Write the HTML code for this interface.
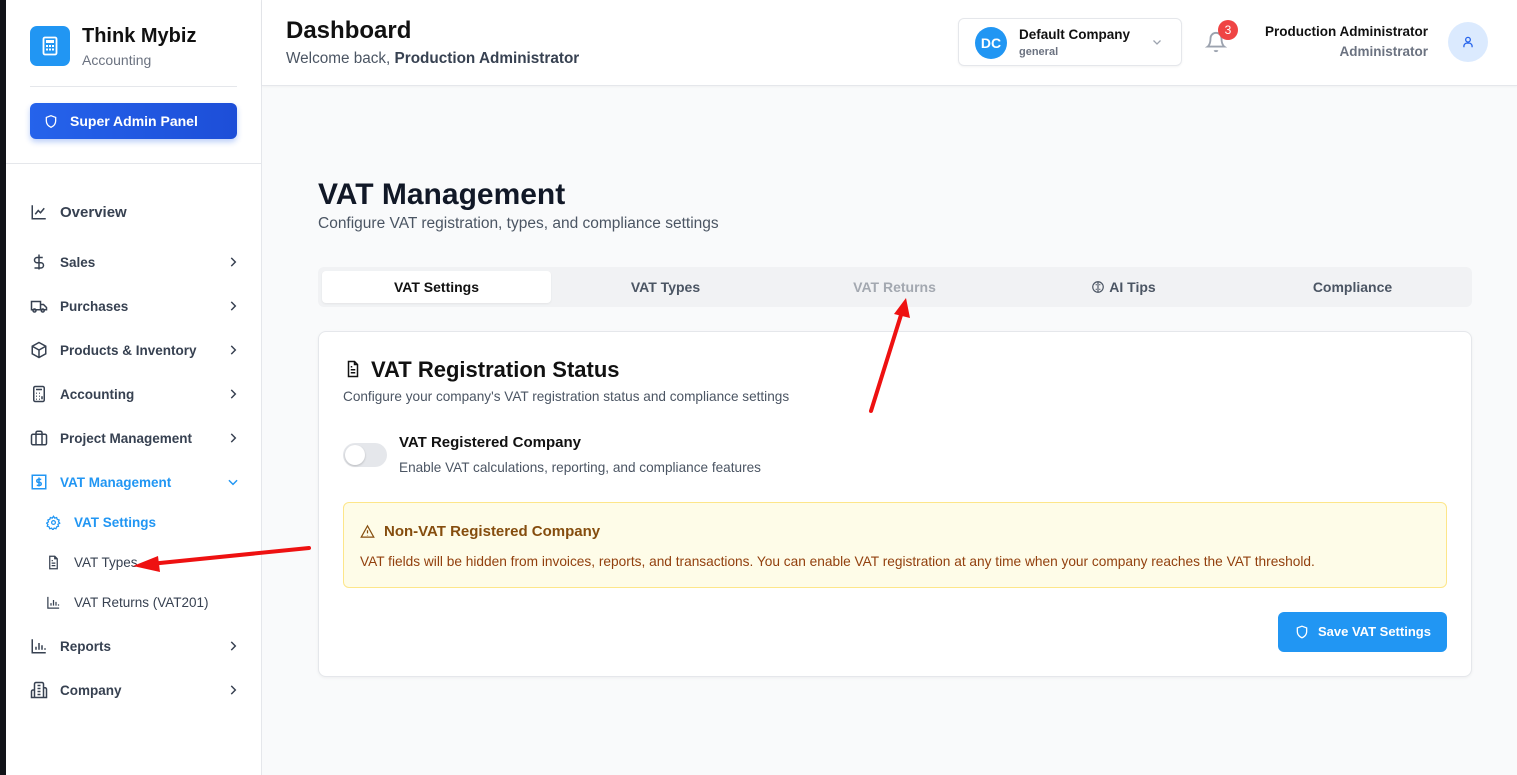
<!DOCTYPE html>
<html><head><meta charset="utf-8">
<style>
*{box-sizing:border-box;margin:0;padding:0}
body{width:1517px;height:775px;overflow:hidden;font-family:"Liberation Sans",sans-serif;background:#f9fafb;position:relative;color:#111827}
.strip{position:absolute;left:0;top:0;width:6px;height:775px;background:#111318}
.side{position:absolute;left:6px;top:0;width:256px;height:775px;background:#fff;border-right:1px solid #e5e7eb}
.logo{position:absolute;left:24px;top:26px;width:40px;height:40px;border-radius:7px;background:#2196f3}
.t1{position:absolute;left:76px;top:25px;font-size:20px;font-weight:bold;color:#111}
.t2{position:absolute;left:76px;top:52px;font-size:14px;color:#6b7280}
.hr1{position:absolute;left:24px;top:86px;width:207px;height:1px;background:#e5e7eb}
.sap{position:absolute;left:24px;top:103px;width:207px;height:36px;border-radius:6px;background:linear-gradient(90deg,#2563eb,#1d4ed8);box-shadow:0 3px 6px rgba(37,99,235,.3);color:#fff;font-weight:bold;font-size:14px;line-height:36px;padding-left:40px}
.hr2{position:absolute;left:0;top:163px;width:256px;height:1px;background:#e5e7eb}
.ni{position:absolute;left:24px;font-size:13.5px;font-weight:bold;color:#374151;height:20px;line-height:20px;width:210px}
.ni svg.ic{position:absolute;left:0;top:1px}
.ni span{position:absolute;left:30px;top:1px}
.ni .ch{position:absolute;right:0;top:3px}
.sub{position:absolute;left:40px;font-size:13.5px;color:#374151;height:20px;line-height:20px}
.sub span{position:absolute;left:28px;top:1px;white-space:nowrap}
.top{position:absolute;left:262px;top:0;width:1255px;height:86px;background:#fff;border-bottom:1px solid #e5e7eb;box-shadow:0 1px 2px rgba(0,0,0,.04)}
</style></head><body>
<div class="strip"></div>
<div class="side">
<div class="logo"><svg width="40" height="40" viewBox="0 0 40 40"><rect x="13.5" y="11.5" width="13" height="17" rx="1.5" fill="none" stroke="#fff" stroke-width="1.8"/><rect x="16" y="14" width="8" height="3" fill="#fff"/><g fill="#fff"><rect x="16" y="19" width="2" height="2"/><rect x="19" y="19" width="2" height="2"/><rect x="22" y="19" width="2" height="2"/><rect x="16" y="22.5" width="2" height="2"/><rect x="19" y="22.5" width="2" height="2"/><rect x="22" y="22.5" width="2" height="2"/></g></svg></div>
<div class="t1">Think Mybiz</div><div class="t2">Accounting</div>
<div class="hr1"></div>
<div class="sap"><svg style="position:absolute;left:14px;top:11px" width="14" height="15" viewBox="0 0 24 24" fill="none" stroke="#fff" stroke-width="2.2"><path d="M12 2l8 3v6c0 5-3.5 9-8 11-4.5-2-8-6-8-11V5z"/></svg>Super Admin Panel</div>
<div class="hr2"></div>
<div class="ni" style="top:202px;font-size:15px"><svg class="ic" width="18" height="18" viewBox="0 0 24 24" fill="none" stroke="#374151" stroke-width="2"><path d="M3 3v18h18M7 15l4-5 3 3 5-6"/></svg><span>Overview</span></div>
<div class="ni" style="top:252px"><svg class="ic" width="18" height="18" viewBox="0 0 24 24" fill="none" stroke="#374151" stroke-width="2"><path d="M12 2v20M17 6H9.5a3.5 3.5 0 0 0 0 7h5a3.5 3.5 0 0 1 0 7H6"/></svg><span>Sales</span><svg class="ch" width="14" height="14" viewBox="0 0 24 24" fill="none" stroke="#374151" stroke-width="2.5"><path d="M9 5l7 7-7 7"/></svg></div>
<div class="ni" style="top:296px"><svg class="ic" width="18" height="18" viewBox="0 0 24 24" fill="none" stroke="#374151" stroke-width="2"><path d="M2 6h12v11H2zM14 10h4l4 4v3h-8"/><circle cx="6" cy="18" r="2"/><circle cx="17" cy="18" r="2"/></svg><span>Purchases</span><svg class="ch" width="14" height="14" viewBox="0 0 24 24" fill="none" stroke="#374151" stroke-width="2.5"><path d="M9 5l7 7-7 7"/></svg></div>
<div class="ni" style="top:340px"><svg class="ic" width="18" height="18" viewBox="0 0 24 24" fill="none" stroke="#374151" stroke-width="2"><path d="M12 2l9 5v10l-9 5-9-5V7zM3 7l9 5 9-5M12 12v10"/></svg><span>Products &amp; Inventory</span><svg class="ch" width="14" height="14" viewBox="0 0 24 24" fill="none" stroke="#374151" stroke-width="2.5"><path d="M9 5l7 7-7 7"/></svg></div>
<div class="ni" style="top:384px"><svg class="ic" width="18" height="18" viewBox="0 0 24 24" fill="none" stroke="#374151" stroke-width="2"><rect x="5" y="2" width="14" height="20" rx="2"/><path d="M8 6h8M8 11h1M12 11h1M16 11h0M8 15h1M12 15h1M8 19h1M12 19h1M16 15v4"/></svg><span>Accounting</span><svg class="ch" width="14" height="14" viewBox="0 0 24 24" fill="none" stroke="#374151" stroke-width="2.5"><path d="M9 5l7 7-7 7"/></svg></div>
<div class="ni" style="top:428px"><svg class="ic" width="18" height="18" viewBox="0 0 24 24" fill="none" stroke="#374151" stroke-width="2"><rect x="2" y="7" width="20" height="14" rx="2"/><path d="M16 21V5a2 2 0 0 0-2-2h-4a2 2 0 0 0-2 2v16"/></svg><span>Project Management</span><svg class="ch" width="14" height="14" viewBox="0 0 24 24" fill="none" stroke="#374151" stroke-width="2.5"><path d="M9 5l7 7-7 7"/></svg></div>
<div class="ni" style="top:472px;color:#2196f3"><svg class="ic" width="18" height="18" viewBox="0 0 24 24" fill="none" stroke="#2196f3" stroke-width="2"><rect x="3" y="3" width="18" height="18"/><path d="M12 6v12M15 8.5h-4a2 2 0 0 0 0 4h2a2 2 0 0 1 0 4H9"/></svg><span>VAT Management</span><svg class="ch" width="14" height="14" viewBox="0 0 24 24" fill="none" stroke="#2196f3" stroke-width="2.5"><path d="M5 9l7 7 7-7"/></svg></div>
<div class="sub" style="top:512px;color:#2196f3;font-weight:bold"><svg style="position:absolute;left:0;top:3px" width="15" height="15" viewBox="0 0 24 24" fill="none" stroke="#2196f3" stroke-width="2"><circle cx="12" cy="12" r="3"/><path d="M12 2l2 3 3-1 1 3 3 1-1 3 2 2-3 2 1 3-3 1-1 3-3-1-2 3-2-3-3 1-1-3-3-1 1-3-2-2 3-2-1-3 3-1 1-3 3 1z"/></svg><span>VAT Settings</span></div>
<div class="sub" style="top:552px"><svg style="position:absolute;left:0;top:3px" width="15" height="15" viewBox="0 0 24 24" fill="none" stroke="#374151" stroke-width="2"><path d="M14 2H6v20h12V6zM14 2v4h4M9 13h6M9 17h6M9 9h2"/></svg><span>VAT Types</span></div>
<div class="sub" style="top:592px"><svg style="position:absolute;left:0;top:3px" width="15" height="15" viewBox="0 0 24 24" fill="none" stroke="#374151" stroke-width="2"><path d="M3 3v18h18M8 17v-4M12 17V8M16 17v-6M20 17v-2"/></svg><span>VAT Returns (VAT201)</span></div>
<div class="ni" style="top:636px"><svg class="ic" width="18" height="18" viewBox="0 0 24 24" fill="none" stroke="#374151" stroke-width="2"><path d="M3 3v18h18M8 17v-4M12 17V8M16 17v-6M20 17v-2"/></svg><span>Reports</span><svg class="ch" width="14" height="14" viewBox="0 0 24 24" fill="none" stroke="#374151" stroke-width="2.5"><path d="M9 5l7 7-7 7"/></svg></div>
<div class="ni" style="top:680px"><svg class="ic" width="18" height="18" viewBox="0 0 24 24" fill="none" stroke="#374151" stroke-width="2"><path d="M6 22V4a2 2 0 0 1 2-2h8a2 2 0 0 1 2 2v18zM6 12H4a2 2 0 0 0-2 2v8h4M18 9h2a2 2 0 0 1 2 2v11h-4M10 6h4M10 10h4M10 14h4M10 18h4"/></svg><span>Company</span><svg class="ch" width="14" height="14" viewBox="0 0 24 24" fill="none" stroke="#374151" stroke-width="2.5"><path d="M9 5l7 7-7 7"/></svg></div>
</div>

<div class="top">
<div style="position:absolute;left:24px;top:17px;font-size:24px;font-weight:bold;color:#111">Dashboard</div>
<div style="position:absolute;left:24px;top:50px;font-size:15.3px;color:#4b5563">Welcome back, <b style="color:#374151">Production Administrator</b></div>
<div style="position:absolute;left:696px;top:18px;width:224px;height:48px;border:1px solid #e5e7eb;border-radius:6px;box-shadow:0 1px 2px rgba(0,0,0,.05)">
<div style="position:absolute;left:16px;top:8px;width:32px;height:32px;border-radius:50%;background:#2196f3;color:#fff;font-weight:bold;font-size:14px;line-height:32px;text-align:center">DC</div>
<div style="position:absolute;left:60px;top:8px;font-size:13.5px;font-weight:bold;color:#111">Default Company</div>
<div style="position:absolute;left:60px;top:27px;font-size:11px;font-weight:bold;color:#6b7280">general</div>
<svg style="position:absolute;left:192px;top:17px" width="12" height="12" viewBox="0 0 24 24" fill="none" stroke="#9ca3af" stroke-width="2.5"><path d="M5 9l7 7 7-7"/></svg>
</div>
<svg style="position:absolute;left:943px;top:31px" width="22" height="22" viewBox="0 0 24 24" fill="none" stroke="#9ca3af" stroke-width="2"><path d="M6 8a6 6 0 0 1 12 0c0 7 3 9 3 9H3s3-2 3-9M10.3 21a1.9 1.9 0 0 0 3.4 0"/></svg>
<div style="position:absolute;left:956px;top:20px;width:20px;height:20px;border-radius:50%;background:#ef4444;color:#fff;font-size:12px;line-height:20px;text-align:center">3</div>
<div style="position:absolute;right:89px;top:24px;font-size:13.5px;font-weight:bold;color:#111;text-align:right">Production Administrator</div>
<div style="position:absolute;right:89px;top:44px;font-size:13.5px;font-weight:bold;color:#6b7280;text-align:right">Administrator</div>
<div style="position:absolute;left:1186px;top:22px;width:40px;height:40px;border-radius:50%;background:#dbeafe"><svg style="position:absolute;left:13px;top:13px" width="14" height="14" viewBox="0 0 24 24" fill="none" stroke="#2563eb" stroke-width="2.2"><circle cx="12" cy="8" r="4"/><path d="M5 21v-2a5 5 0 0 1 5-5h4a5 5 0 0 1 5 5v2"/></svg></div>
</div>

<div style="position:absolute;left:318px;top:178px;font-size:30px;font-weight:bold;color:#111827">VAT Management</div>
<div style="position:absolute;left:318px;top:215px;font-size:15.5px;color:#4b5563">Configure VAT registration, types, and compliance settings</div>

<div style="position:absolute;left:318px;top:267px;width:1154px;height:40px;background:#f1f2f4;border-radius:6px;font-size:14px;font-weight:bold">
<div style="position:absolute;left:4px;top:4px;width:229px;height:32px;background:#fff;border-radius:4px;box-shadow:0 1px 2px rgba(0,0,0,.06);text-align:center;line-height:32px;color:#111">VAT Settings</div>
<div style="position:absolute;left:233px;top:4px;width:229px;line-height:32px;text-align:center;color:#4b5563">VAT Types</div>
<div style="position:absolute;left:462px;top:4px;width:229px;line-height:32px;text-align:center;color:#a3a8b0">VAT Returns</div>
<div style="position:absolute;left:691px;top:4px;width:229px;line-height:32px;text-align:center;color:#4b5563"><svg style="vertical-align:-2px;margin-right:4px" width="14" height="14" viewBox="0 0 24 24" fill="none" stroke="#4b5563" stroke-width="2"><circle cx="12" cy="12" r="9"/><path d="M12 3v18M8 8h2M14 8h2M8 16h2M14 16h2"/></svg>AI Tips</div>
<div style="position:absolute;left:920px;top:4px;width:229px;line-height:32px;text-align:center;color:#4b5563">Compliance</div>
</div>

<div style="position:absolute;left:318px;top:331px;width:1154px;height:346px;background:#fff;border:1px solid #e5e7eb;border-radius:8px;box-shadow:0 1px 3px rgba(0,0,0,.05)">
<svg style="position:absolute;left:25px;top:28px" width="18" height="18" viewBox="0 0 24 24" fill="none" stroke="#111" stroke-width="2"><path d="M14 2H6v20h12V6zM14 2v4h4M9 13h6M9 17h6M9 9h2"/></svg>
<div style="position:absolute;left:52px;top:25px;font-size:22px;font-weight:bold;color:#111">VAT Registration Status</div>
<div style="position:absolute;left:24px;top:57px;font-size:13.6px;color:#4b5563">Configure your company's VAT registration status and compliance settings</div>
<div style="position:absolute;left:24px;top:111px;width:44px;height:24px;border-radius:12px;background:#e5e7eb"><div style="position:absolute;left:2px;top:2px;width:20px;height:20px;border-radius:50%;background:#fff;box-shadow:0 1px 2px rgba(0,0,0,.2)"></div></div>
<div style="position:absolute;left:80px;top:102px;font-size:15px;font-weight:bold;color:#111">VAT Registered Company</div>
<div style="position:absolute;left:80px;top:128px;font-size:13.6px;color:#4b5563">Enable VAT calculations, reporting, and compliance features</div>
<div style="position:absolute;left:24px;top:170px;width:1104px;height:86px;background:#fefce8;border:1px solid #fde68a;border-radius:6px">
<svg style="position:absolute;left:16px;top:21px" width="15" height="15" viewBox="0 0 24 24" fill="none" stroke="#854d0e" stroke-width="2"><path d="M12 3L2 21h20zM12 10v5M12 18v.5"/></svg>
<div style="position:absolute;left:40px;top:20px;font-size:15px;font-weight:bold;color:#854d0e">Non-VAT Registered Company</div>
<div style="position:absolute;left:16px;top:51px;font-size:13.7px;color:#92400e">VAT fields will be hidden from invoices, reports, and transactions. You can enable VAT registration at any time when your company reaches the VAT threshold.</div>
</div>
<div style="position:absolute;left:959px;top:280px;width:169px;height:40px;background:#2196f3;border-radius:6px;color:#fff;font-size:13px;font-weight:bold;line-height:40px;padding-left:40px;white-space:nowrap"><svg style="position:absolute;left:17px;top:13px" width="14" height="14" viewBox="0 0 24 24" fill="none" stroke="#fff" stroke-width="2.2"><path d="M12 2l8 3v6c0 5-3.5 9-8 11-4.5-2-8-6-8-11V5z"/></svg>Save VAT Settings</div>
</div>

<svg style="position:absolute;left:0;top:0" width="1517" height="775">
<line x1="309" y1="548" x2="150" y2="564" stroke="#ee1111" stroke-width="4" stroke-linecap="round"/>
<polygon points="133,566 158,556 160,572" fill="#ee1111"/>
<line x1="871" y1="411" x2="901" y2="315" stroke="#ee1111" stroke-width="4" stroke-linecap="round"/>
<polygon points="906,298 910,318 894,314" fill="#ee1111"/>
</svg>
</body></html>
